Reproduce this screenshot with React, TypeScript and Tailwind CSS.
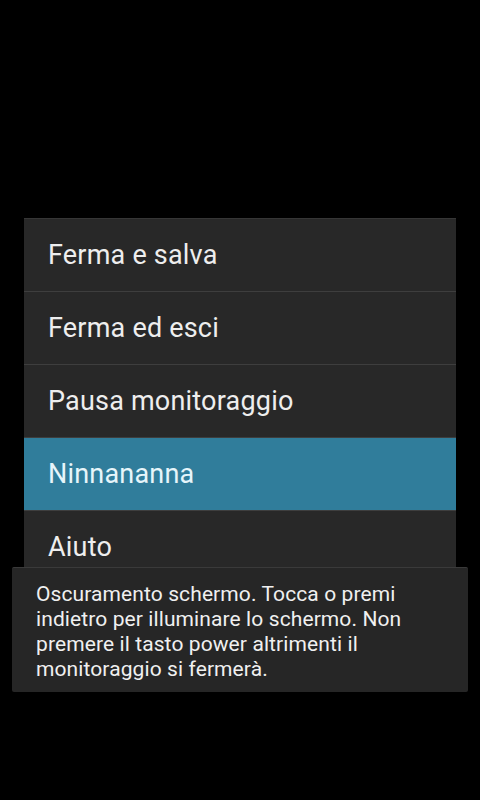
const items = ['Ferma e salva', 'Ferma ed esci', 'Pausa monitoraggio', 'Ninnananna', 'Aiuto'];

export default function App() {
  return (
    <div
      className="relative w-[480px] h-[800px] bg-black overflow-hidden"
      style={{ fontFamily: 'Roboto, "Liberation Sans", sans-serif' }}
    >
      <div className="pt-[218px] px-[24px]">
        <div className="bg-[#282828] border-t border-[#363636]">
          {items.map((label, i) => (
            <div key={label}>
              {i > 0 && <div className="h-px bg-[#3e3e3e]" />}
              <div
                className={
                  'h-[72px] flex items-center pl-[24px] text-[27px] tracking-[0.2px] ' +
                  (label === 'Ninnananna' ? 'bg-[#307d9b] text-[#e6f5fa]' : 'text-[#eeeeee]')
                }
              >
                {label}
              </div>
            </div>
          ))}
        </div>
      </div>

      <div className="absolute left-[12px] top-[567px] w-[456px] h-[125px] bg-[#262626] border-t border-[#3a3a3a] px-[24px] pt-[14px] rounded-[2px]">
        <p className="text-[21px] leading-[25px] tracking-[0.1px] text-[#f0f0f0]">
          Oscuramento schermo. Tocca o premi indietro per illuminare lo schermo. Non premere il tasto power altrimenti il monitoraggio si fermerà.
        </p>
      </div>
    </div>
  );
}
